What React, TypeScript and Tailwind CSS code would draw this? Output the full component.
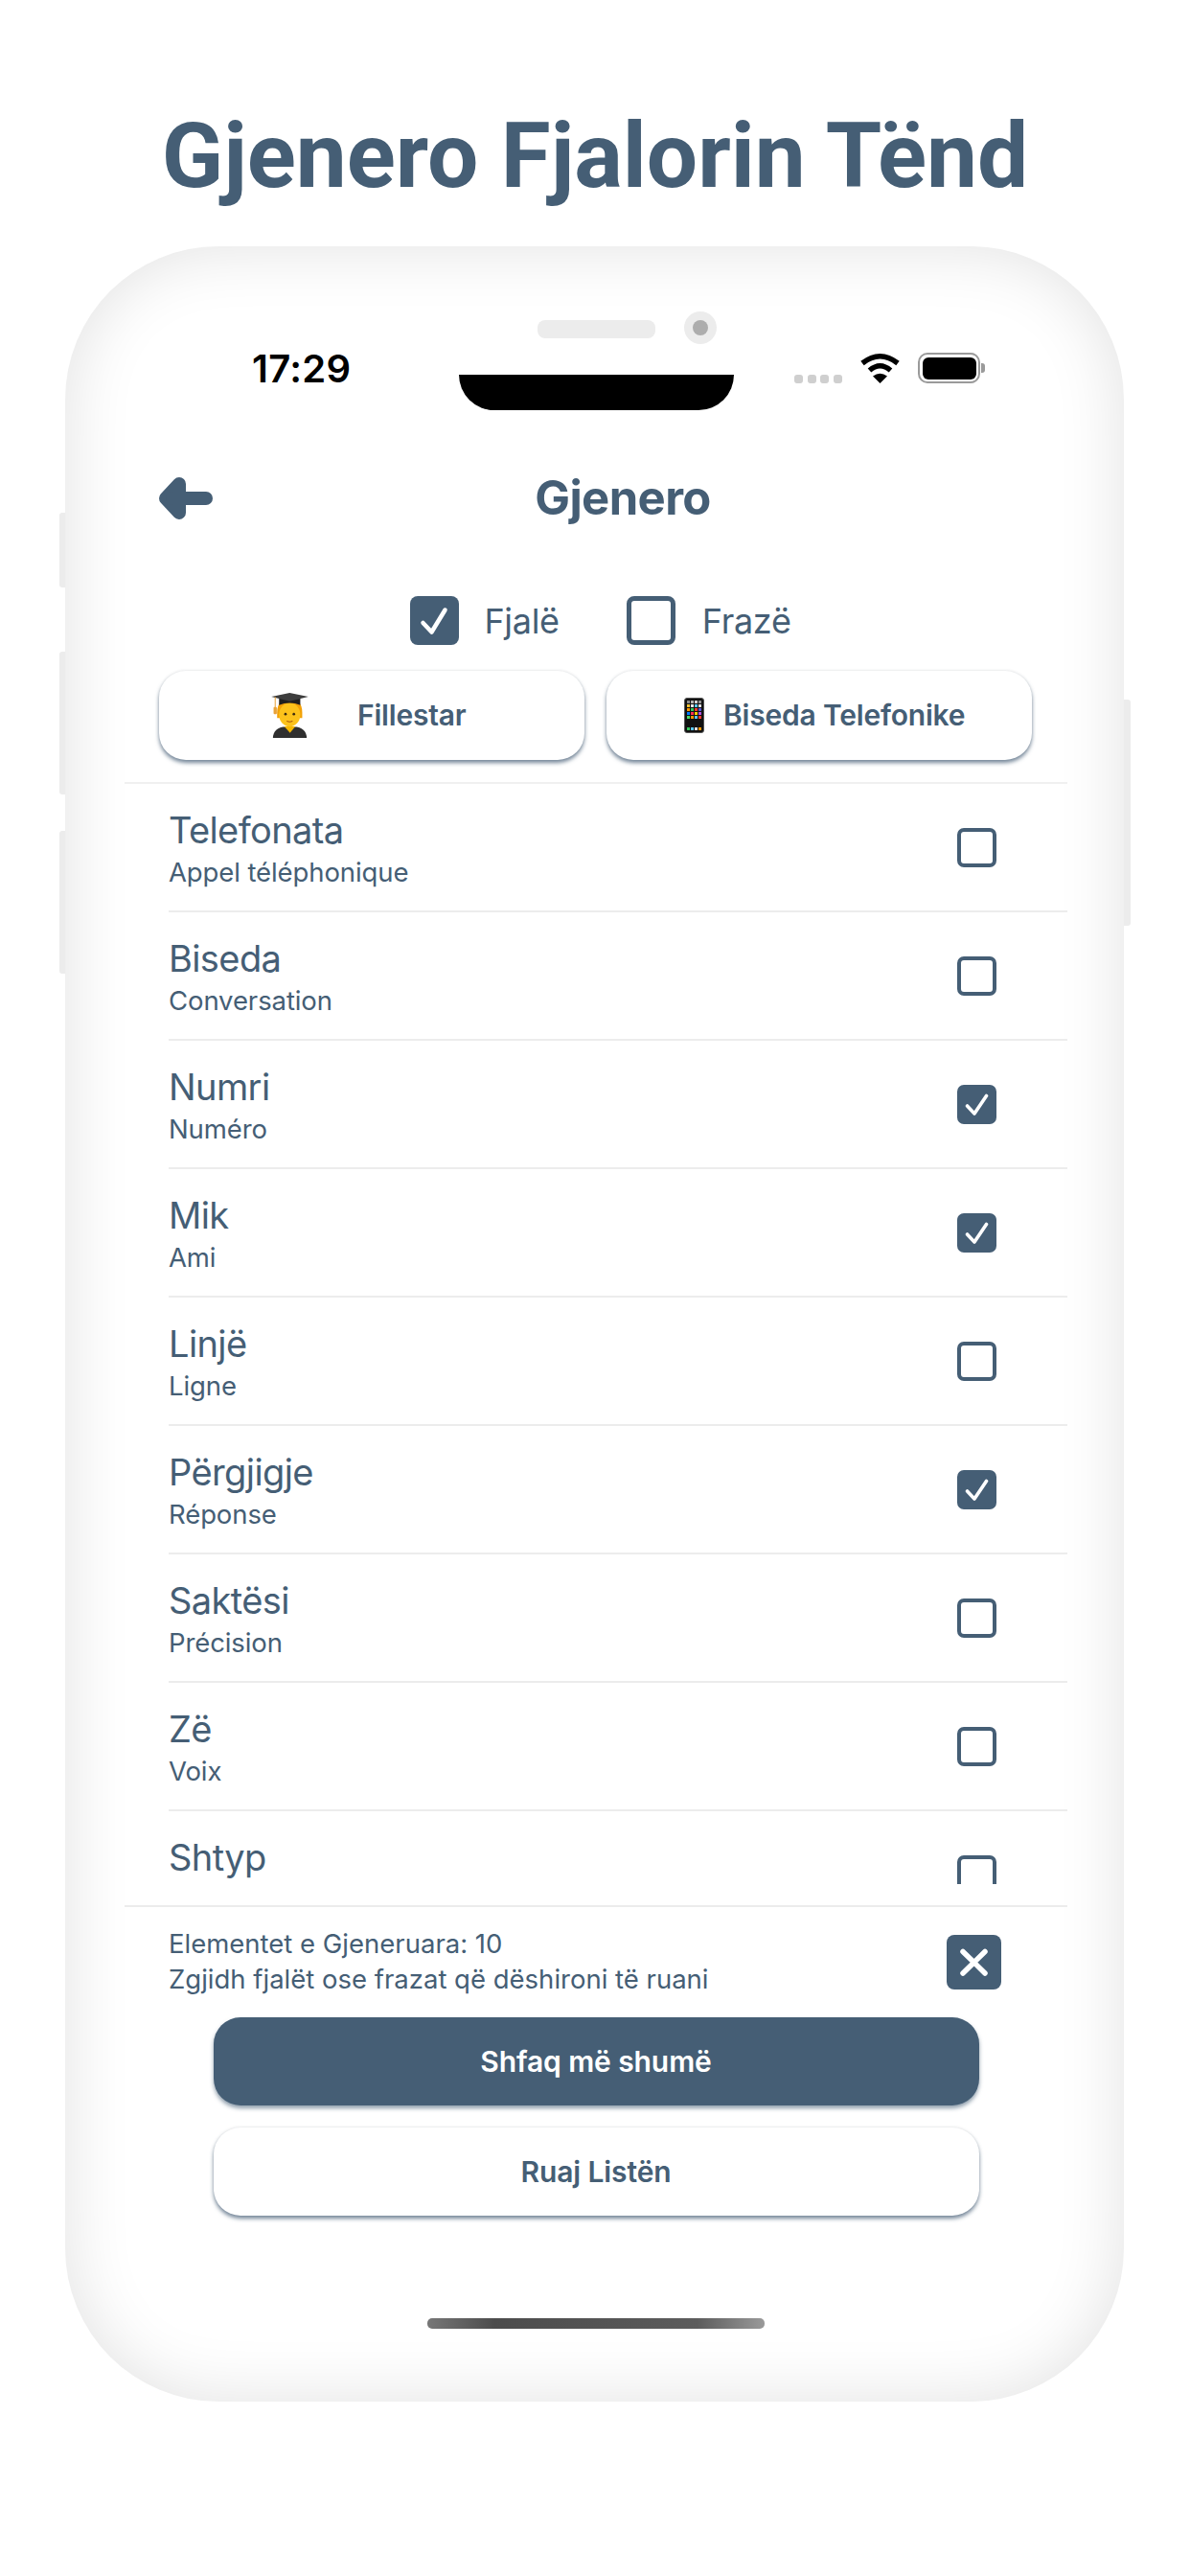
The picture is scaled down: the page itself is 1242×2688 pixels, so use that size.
const words = [
  { title: "Telefonata", sub: "Appel téléphonique", on: false },
  { title: "Biseda", sub: "Conversation", on: false },
  { title: "Numri", sub: "Numéro", on: true },
  { title: "Mik", sub: "Ami", on: true },
  { title: "Linjë", sub: "Ligne", on: false },
  { title: "Përgjigje", sub: "Réponse", on: true },
  { title: "Saktësi", sub: "Précision", on: false },
  { title: "Zë", sub: "Voix", on: false },
  { title: "Shtyp", sub: "", on: false },
];

const appColors = [
  "#8a8a8a", "#b0b0b0", "#d0d0d0", "#909090",
  "#f2c230", "#e8e8e8", "#5ac8fa", "#e0e0e0",
  "#ff9500", "#34c759", "#ff3b30", "#5856d6",
  "#007aff", "#ff2d55", "#ffcc00", "#af52de",
  "#4cd964", "#ff9500", "#5ac8fa", "#ff3b30",
];

function CheckMark({ big }: { big?: boolean }) {
  if (big) {
    return (
      <svg viewBox="0 0 51 51" className="h-[51px] w-[51px]">
        <path d="M13.5 28 L22.5 37.5 L36.5 14.5" fill="none" stroke="#fff" strokeWidth="4.5" strokeLinecap="round" strokeLinejoin="round" />
      </svg>
    );
  }
  return (
    <svg viewBox="0 0 41 41" className="h-[41px] w-[41px]">
      <path d="M10.5 22 L18 30 L30.5 11.5" fill="none" stroke="#fff" strokeWidth="3.6" strokeLinecap="round" strokeLinejoin="round" />
    </svg>
  );
}

function RowCheck({ on }: { on: boolean }) {
  return on ? (
    <div className="h-[41px] w-[41px] shrink-0 rounded-[7px] bg-[#455e75]">
      <CheckMark />
    </div>
  ) : (
    <div className="h-[41px] w-[41px] shrink-0 rounded-[7px] border-[4px] border-[#455e75]" />
  );
}

function StudentEmoji() {
  return (
    <svg viewBox="0 0 115 140" className="h-[47px] w-[39px]">
      <path d="M5 140 Q6 112 36 106 L79 106 Q109 112 110 140 Z" fill="#2f2f2f" />
      <path d="M40 104 L75 104 L58 124 Z" fill="#f5b700" />
      <path d="M18 60 Q18 20 57 20 Q96 20 96 60 L96 78 L18 78 Z" fill="#f2a007" />
      <ellipse cx="57" cy="68" rx="33" ry="37" fill="#fcc21b" />
      <circle cx="44" cy="66" r="4" fill="#3a2a10" />
      <circle cx="70" cy="66" r="4" fill="#3a2a10" />
      <path d="M49 88 Q57 92 65 88" fill="none" stroke="#a5560f" strokeWidth="3" strokeLinecap="round" />
      <path d="M24 18 H90 V38 Q57 24 24 38 Z" fill="#1f1f1f" />
      <path d="M0 12 L57 0 L115 12 L57 26 Z" fill="#3d3d3d" />
      <path d="M12 13 V46" stroke="#e8a23a" strokeWidth="3" />
      <rect x="7" y="44" width="10" height="22" rx="3" fill="#e8a23a" />
    </svg>
  );
}

function PhoneEmoji() {
  return (
    <div className="flex h-[37px] w-[21px] flex-col justify-between rounded-[3px] border-[1.5px] border-[#555] bg-[#111] p-[2px]">
      <div className="grid grid-cols-4 gap-[1.5px]">
        {appColors.map((c, i) => (
          <span key={i} className="h-[2.5px]" style={{ backgroundColor: c }} />
        ))}
      </div>
      <div className="grid grid-cols-4 gap-[1.5px]">
        <span className="h-[3px] bg-[#34c759]" />
        <span className="h-[3px] bg-[#5ac8fa]" />
        <span className="h-[3px] bg-[#e0e0e0]" />
        <span className="h-[3px] bg-[#ff9500]" />
      </div>
    </div>
  );
}

function WordRow({ title, sub, on }: { title: string; sub: string; on: boolean }) {
  return (
    <div className="flex h-[134px] shrink-0 items-center justify-between border-b-2 border-[#ececec] pr-[74px]">
      <div className="flex flex-col self-start pt-[25px]">
        <span className="text-[38px] leading-[46px] tracking-[-0.6px] text-[#455e75]">{title}</span>
        {sub && <span className="mt-[4px] text-[27.5px] leading-[34px] tracking-[-0.1px] text-[#455e75]">{sub}</span>}
      </div>
      <RowCheck on={on} />
    </div>
  );
}

export default function App() {
  return (
    <div className="flex h-[2688px] w-[1242px] flex-col items-center overflow-hidden bg-white font-['Inter',sans-serif]">
      <div className="h-[257px] w-full pt-[116px] text-center font-['Roboto',sans-serif] text-[94.5px] font-bold leading-none text-[#455e75]">
        Gjenero Fjalorin Tënd
      </div>

      <div className="relative ml-[68px] h-[2249px] w-[1105px] self-start rounded-[160px] bg-white pl-[62px] pr-[59px] shadow-[inset_0_0_70px_rgba(0,0,0,0.12)]">
        {/* side buttons */}
        <div className="absolute left-[-6px] top-[278px] h-[78px] w-[6px] rounded-l-[3px] bg-[#ececec]" />
        <div className="absolute left-[-6px] top-[423px] h-[149px] w-[6px] rounded-l-[3px] bg-[#ececec]" />
        <div className="absolute left-[-6px] top-[610px] h-[149px] w-[6px] rounded-l-[3px] bg-[#ececec]" />
        <div className="absolute right-[-7px] top-[473px] h-[236px] w-[7px] rounded-r-[3px] bg-[#ececec]" />

        {/* speaker + camera */}
        <div className="absolute left-[493px] top-[77px] h-[19px] w-[123px] rounded-[8px] bg-[#ececec]" />
        <div className="absolute left-[646px] top-[68px] flex h-[34px] w-[34px] items-center justify-center rounded-full bg-[#ececec]">
          <div className="h-[16px] w-[16px] rounded-full bg-[#adadad]" />
        </div>

        {/* notch */}
        <div className="absolute left-[411px] top-[134px] h-[37px] w-[287px] rounded-b-[40px] bg-black" />

        <div className="flex h-[143px] items-end justify-between pl-[133px] pr-[86px]">
          <span className="mb-[-1px] text-[40px] font-semibold leading-[32px] tracking-[0.3px] text-black">17:29</span>
          <div className="flex items-end">
            <div className="flex gap-[4.7px]">
              <span className="h-[9px] w-[9px] rounded-[3px] bg-[#cfcfcf]" />
              <span className="h-[9px] w-[9px] rounded-[3px] bg-[#cfcfcf]" />
              <span className="h-[9px] w-[9px] rounded-[3px] bg-[#cfcfcf]" />
              <span className="h-[9px] w-[9px] rounded-[3px] bg-[#cfcfcf]" />
            </div>
            <svg viewBox="0 0 43 32" className="ml-[18px] h-[32px] w-[43px]">
              <path d="M3 11 Q21.5 -3.5 40 11" fill="none" stroke="#000" strokeWidth="5.5" />
              <path d="M10.5 18.5 Q21.5 9 32.5 18.5" fill="none" stroke="#000" strokeWidth="5.5" />
              <path d="M21.5 32 L14 24.5 Q21.5 19 29 24.5 Z" fill="#000" />
            </svg>
            <div className="ml-[18px] flex items-center">
              <div className="h-[32px] w-[65px] rounded-[10px] border-[2.5px] border-[#9a9a9a] p-[2.5px]">
                <div className="h-full w-full rounded-[6px] bg-black" />
              </div>
              <div className="ml-[1px] h-[10px] w-[4px] rounded-r-[3px] bg-[#9a9a9a]" />
            </div>
          </div>
        </div>

        <div className="mt-[90px] flex h-[60px] items-center px-[36px]">
          <svg viewBox="0 0 56 44" className="h-[44px] w-[56px] shrink-0">
            <path d="M21 7 L7 22 L21 37 Z" fill="#455e75" stroke="#455e75" strokeWidth="14" strokeLinejoin="round" />
            <path d="M14 22 H49" stroke="#455e75" strokeWidth="14" strokeLinecap="round" />
          </svg>
          <span className="flex-1 text-center text-[49px] font-bold leading-[60px] tracking-[-0.6px] text-[#455e75]">Gjenero</span>
        </div>

        <div className="mt-[72px] flex h-[51px] items-center justify-center pl-[10px] text-[36px] text-[#455e75]">
          <div className="h-[51px] w-[51px] rounded-[8px] bg-[#455e75]">
            <CheckMark big />
          </div>
          <span className="ml-[26px] tracking-[-0.3px]">Fjalë</span>
          <div className="ml-[70px] h-[51px] w-[51px] rounded-[8px] border-[5px] border-[#455e75]" />
          <span className="ml-[28px] tracking-[-0.3px]">Frazë</span>
        </div>

        <div className="mt-[27px] flex gap-[23px] px-[36px]">
          <button className="flex h-[93px] w-[444px] shrink-0 items-center rounded-[28px] bg-white pl-[117px] shadow-[0_3px_4px_rgba(69,94,117,0.75),0_-1px_3px_rgba(0,0,0,0.05)]">
            <StudentEmoji />
            <span className="ml-[51px] text-[30px] font-semibold tracking-[-0.2px] text-[#455e75]">Fillestar</span>
          </button>
          <button className="flex h-[93px] w-[444px] shrink-0 items-center rounded-[28px] bg-white pl-[81px] shadow-[0_3px_4px_rgba(69,94,117,0.75),0_-1px_3px_rgba(0,0,0,0.05)]">
            <PhoneEmoji />
            <span className="ml-[20px] text-[30px] font-semibold tracking-[-0.2px] text-[#455e75]">Biseda Telefonike</span>
          </button>
        </div>

        <div className="mt-[23px] h-[1150px] overflow-hidden border-t-2 border-[#f0f0f0] pl-[46px]">
          {words.map((w) => (
            <WordRow key={w.title} title={w.title} sub={w.sub} on={w.on} />
          ))}
        </div>

        <div className="mt-[22px] flex items-center justify-between border-t-2 border-[#ececec] pl-[46px] pr-[69px] pt-[20px]">
          <div className="flex flex-col text-[27.5px] leading-[37px] text-[#455e75]">
            <span>Elementet e Gjeneruara: 10</span>
            <span>Zgjidh fjalët ose frazat që dëshironi të ruani</span>
          </div>
          <div className="flex h-[57px] w-[57px] items-center justify-center rounded-[8px] bg-[#455e75]">
            <svg viewBox="0 0 57 57" className="h-[57px] w-[57px]">
              <path d="M17 17.5 L40 40 M40 17.5 L17 40" stroke="#fff" strokeWidth="5.5" strokeLinecap="round" />
            </svg>
          </div>
        </div>

        <div className="mx-auto mt-[21px] flex w-[799px] flex-col gap-[23px]">
          <button className="h-[92px] rounded-[28px] bg-[#455e75] text-[30px] font-semibold tracking-[-0.1px] text-white shadow-[0_3px_4px_rgba(69,94,117,0.6)]">
            Shfaq më shumë
          </button>
          <button className="h-[92px] rounded-[28px] bg-white text-[30px] font-semibold tracking-[-0.1px] text-[#455e75] shadow-[0_3px_4px_rgba(69,94,117,0.75),0_-1px_3px_rgba(0,0,0,0.05)]">
            Ruaj Listën
          </button>
        </div>

        <div className="mx-auto mt-[107px] h-[11px] w-[352px] rounded-[5px] bg-[linear-gradient(90deg,#777,#4c4c4c_20%,#5c5c5c_80%,#9a9a9a)]" />
      </div>
    </div>
  );
}
